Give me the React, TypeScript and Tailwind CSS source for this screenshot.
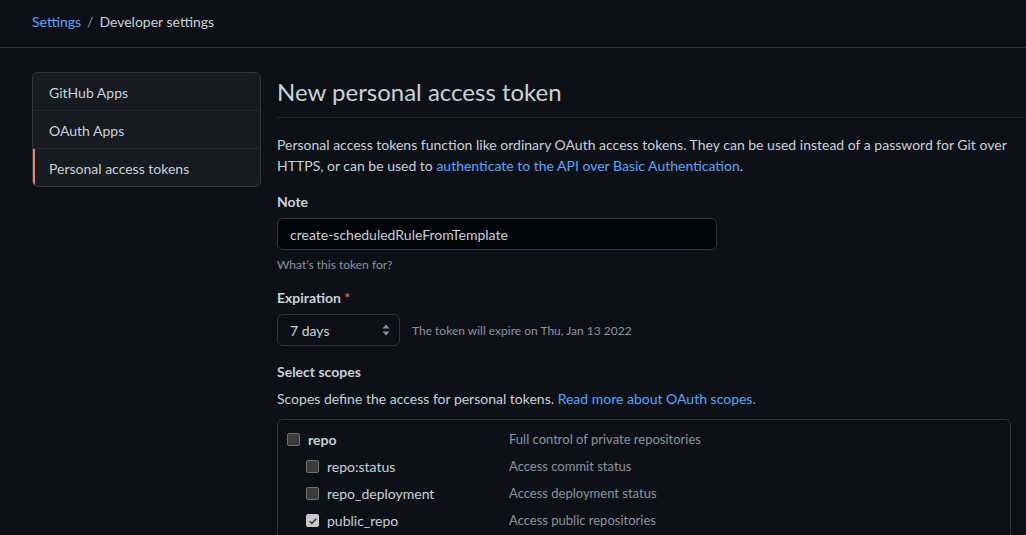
import { ReactNode } from 'react';

const font = { fontFamily: 'Lato, "Noto Sans", "Liberation Sans", sans-serif' };

function Checkbox({ checked = false }: { checked?: boolean }) {
  return (
    <span
      className={`inline-flex w-[13px] h-[13px] shrink-0 items-center justify-center rounded-[2px] border ${
        checked ? 'bg-[#c9c9c9] border-[#c9c9c9]' : 'bg-[#3b3b3b] border-[#6f6f6f]'
      }`}
    >
      {checked && (
        <svg viewBox="0 0 12 12" className="w-[10px] h-[10px]">
          <path d="M2 6.2l2.6 2.6L10 3.2" fill="none" stroke="#3b3b3b" strokeWidth={1.8} />
        </svg>
      )}
    </span>
  );
}

function ScopeRow({
  label,
  desc,
  sub = false,
  checked = false,
}: {
  label: string;
  desc: string;
  sub?: boolean;
  checked?: boolean;
}) {
  return (
    <div className="flex items-center h-[27px]">
      <div className={`flex items-center gap-2 w-[222px] ${sub ? 'pl-[19px]' : ''}`}>
        <Checkbox checked={checked} />
        <span className={sub ? 'text-[#c9d1d9]' : 'font-bold text-[#c9d1d9]'}>{label}</span>
      </div>
      <span className="text-[13px] text-[#8b949e]">{desc}</span>
    </div>
  );
}

function Label({ children }: { children: ReactNode }) {
  return <div className="text-sm font-bold text-[#c9d1d9] leading-5">{children}</div>;
}

export default function App() {
  return (
    <div className="h-[535px] bg-[#0d1117] text-[#c9d1d9] text-sm overflow-hidden" style={font}>
      {/* Breadcrumb */}
      <div className="h-[48px] border-b border-[#30363d] flex items-center px-8 pb-[3px]">
        <a className="text-[#58a6ff]">Settings</a>
        <span className="mx-[6px] text-[#8b949e]">/</span>
        <span>Developer settings</span>
      </div>

      <div className="flex gap-4 pl-8 pt-6">
        {/* Sidebar */}
        <nav className="w-[229px] shrink-0 self-start rounded-md border border-[#30363d] bg-[#161b22] overflow-hidden">
          <div className="h-[38px] flex items-center px-4 pt-[2px] border-b border-[#21262d]">GitHub Apps</div>
          <div className="h-[38px] flex items-center px-4 pt-[2px] border-b border-[#21262d]">OAuth Apps</div>
          <div className="h-[37px] flex items-center px-4 pt-[2px] border-l-2 border-[#f78166] pl-[14px]">
            Personal access tokens
          </div>
        </nav>

        {/* Main */}
        <main className="flex-1 min-w-0">
          <div className="pt-[2px] pb-[7px] border-b border-[#21262d] mb-4 -mr-8">
            <h1 className="text-2xl font-normal leading-[36px] text-[#c9d1d9]">New personal access token</h1>
          </div>
          <p className="leading-[21px] max-w-[740px] mb-[16px] mt-[1px]">
            Personal access tokens function like ordinary OAuth access tokens. They can be used instead of a
            password for Git over HTTPS, or can be used to{' '}
            <a className="text-[#58a6ff]">authenticate to the API over Basic Authentication</a>.
          </p>

          <Label>Note</Label>
          <input
            readOnly
            value="create-scheduledRuleFromTemplate"
            className="mt-[6px] w-[440px] h-[32px] px-3 pt-[1px] rounded-md border border-[#30363d] bg-[#010409] text-[#c9d1d9] outline-none"
            style={font}
          />
          <div className="text-xs text-[#8b949e] mt-[6px] leading-[18px]">What’s this token for?</div>

          <div className="mt-[14px]">
            <Label>
              Expiration <span className="text-[#f85149]">*</span>
            </Label>
          </div>
          <div className="mt-[6px] flex items-center gap-3">
            <div className="w-[123px] h-[32px] rounded-md border border-[#30363d] bg-[#0d1117] flex items-center justify-between pl-3 pr-[9px]">
              <span className="pt-[1px]">7 days</span>
              <svg viewBox="0 0 8 12" className="w-[8px] h-[12px]">
                <path d="M4 0.5L7.5 4.5H0.5Z" fill="#8b949e" />
                <path d="M4 11.5L7.5 7.5H0.5Z" fill="#8b949e" />
              </svg>
            </div>
            <span className="text-xs text-[#8b949e] pt-[1px]">The token will expire on Thu, Jan 13 2022</span>
          </div>

          <div className="mt-[16px]">
            <Label>Select scopes</Label>
          </div>
          <p className="mt-[6px] leading-[21px]">
            Scopes define the access for personal tokens.{' '}
            <a className="text-[#58a6ff]">Read more about OAuth scopes.</a>
          </p>

          <div className="mt-[10px] mr-[15px] rounded-md border border-[#30363d] pt-[6px] pl-[9px] h-[200px]">
            <ScopeRow label="repo" desc="Full control of private repositories" />
            <ScopeRow sub label="repo:status" desc="Access commit status" />
            <ScopeRow sub label="repo_deployment" desc="Access deployment status" />
            <ScopeRow sub checked label="public_repo" desc="Access public repositories" />
          </div>
        </main>
      </div>
    </div>
  );
}
